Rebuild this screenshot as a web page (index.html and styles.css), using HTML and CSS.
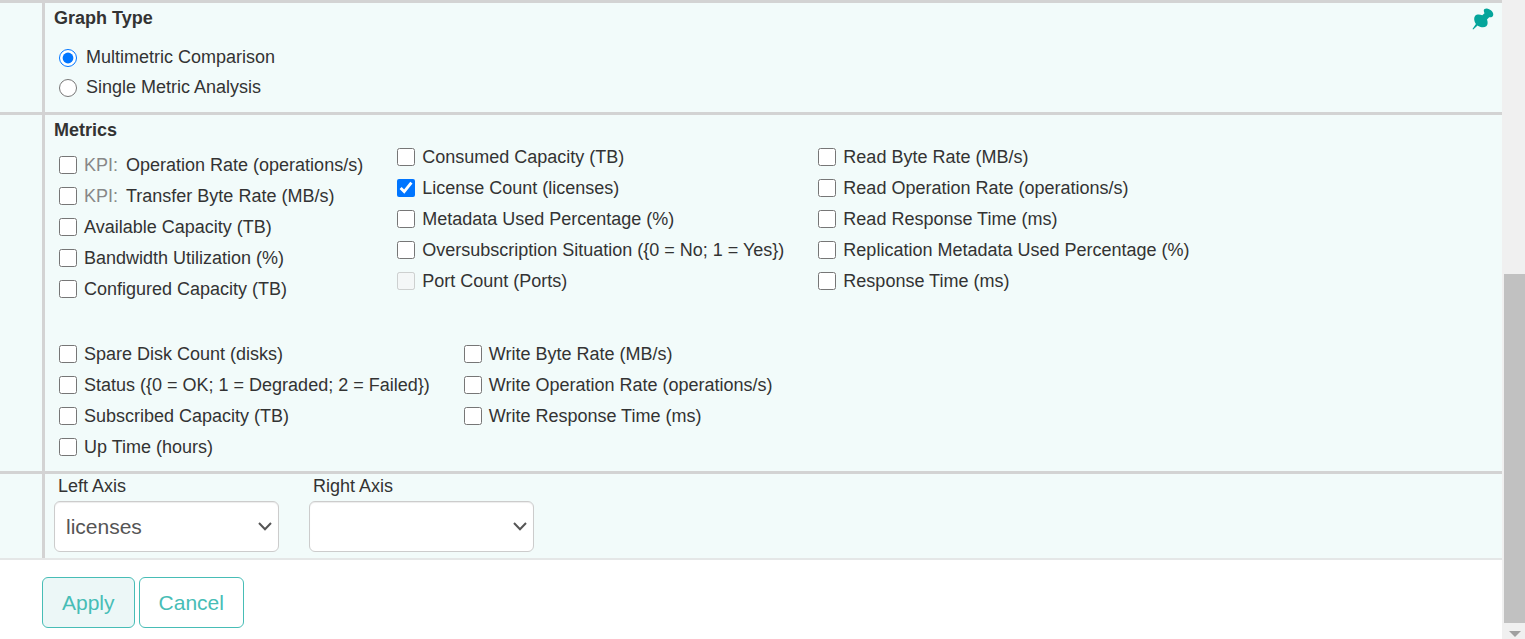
FILE: index.html
```html
<!DOCTYPE html>
<html lang="en">
<head>
    <meta charset="UTF-8">
    <meta name="viewport" content="width=device-width, initial-scale=1.0">
    <title>Graph Settings</title>
    <link rel="stylesheet" href="styles.css">
</head>
<body>

    <div class="page">
        <form class="settings">

            <div class="row">
                <div class="gutter"></div>
                <div class="cell graph-type">
                    <h2>Graph Type</h2>
                    <button type="button" class="pin" aria-label="Pin">
                        <svg width="22" height="22" viewBox="0 0 22 22"><path fill="#05a59b" d="M11.800 2.600C11.600 1.200 13 .4 14.600 .4C16.200 .4 18.200 1.400 19.500 2.700C21 4.300 21.800 6.300 21 7.800C20.300 9.100 18.900 9.500 17.200 9.200L15 11.500C16 14 15.900 16.800 14.300 18.200C12.400 19.900 9 19.600 6.200 17.900L5.600 17.500L1.200 21.500L.5 20.900L3.900 15.900C2.100 13.300 1.500 9.700 3 7.900C4.600 6 7.700 6.100 10.300 7.200L12.500 5.200C12 4.400 11.800 3.500 11.800 2.600Z"/></svg>
                    </button>
                    <label class="radio"><input type="radio" name="graph-type" checked> Multimetric Comparison</label>
                    <label class="radio"><input type="radio" name="graph-type"> Single Metric Analysis</label>
                </div>
            </div>

            <div class="row">
                <div class="gutter"></div>
                <div class="cell metrics">
                    <h2>Metrics</h2>
                    <div class="group">
                        <div class="column kpi-column">
                            <label class="check"><input type="checkbox"><span class="kpi">KPI:</span>Operation Rate (operations/s)</label>
                            <label class="check"><input type="checkbox"><span class="kpi">KPI:</span>Transfer Byte Rate (MB/s)</label>
                            <label class="check"><input type="checkbox">Available Capacity (TB)</label>
                            <label class="check"><input type="checkbox">Bandwidth Utilization (%)</label>
                            <label class="check"><input type="checkbox">Configured Capacity (TB)</label>
                        </div>
                        <div class="column">
                            <label class="check"><input type="checkbox">Consumed Capacity (TB)</label>
                            <label class="check"><input type="checkbox" checked>License Count (licenses)</label>
                            <label class="check"><input type="checkbox">Metadata Used Percentage (%)</label>
                            <label class="check"><input type="checkbox">Oversubscription Situation ({0 = No; 1 = Yes})</label>
                            <label class="check"><input type="checkbox" disabled>Port Count (Ports)</label>
                        </div>
                        <div class="column">
                            <label class="check"><input type="checkbox">Read Byte Rate (MB/s)</label>
                            <label class="check"><input type="checkbox">Read Operation Rate (operations/s)</label>
                            <label class="check"><input type="checkbox">Read Response Time (ms)</label>
                            <label class="check"><input type="checkbox">Replication Metadata Used Percentage (%)</label>
                            <label class="check"><input type="checkbox">Response Time (ms)</label>
                        </div>
                    </div>
                    <div class="group">
                        <div class="column">
                            <label class="check"><input type="checkbox">Spare Disk Count (disks)</label>
                            <label class="check"><input type="checkbox">Status ({0 = OK; 1 = Degraded; 2 = Failed})</label>
                            <label class="check"><input type="checkbox">Subscribed Capacity (TB)</label>
                            <label class="check"><input type="checkbox">Up Time (hours)</label>
                        </div>
                        <div class="column">
                            <label class="check"><input type="checkbox">Write Byte Rate (MB/s)</label>
                            <label class="check"><input type="checkbox">Write Operation Rate (operations/s)</label>
                            <label class="check"><input type="checkbox">Write Response Time (ms)</label>
                        </div>
                    </div>
                </div>
            </div>

            <div class="row">
                <div class="gutter"></div>
                <div class="cell axes">
                    <div class="axis">
                        <label for="left-axis">Left Axis</label>
                        <div class="select-box">
                            <select id="left-axis">
                                <option>licenses</option>
                            </select>
                            <svg class="arrow" width="14" height="9" viewBox="0 0 14 9"><path d="M1 1L7 7.200L13 1" fill="none" stroke="#555" stroke-width="2"/></svg>
                        </div>
                    </div>
                    <div class="axis">
                        <label for="right-axis">Right Axis</label>
                        <div class="select-box">
                            <select id="right-axis">
                                <option></option>
                            </select>
                            <svg class="arrow" width="14" height="9" viewBox="0 0 14 9"><path d="M1 1L7 7.200L13 1" fill="none" stroke="#555" stroke-width="2"/></svg>
                        </div>
                    </div>
                </div>
            </div>

            <div class="actions">
                <button type="submit" class="btn btn-apply">Apply</button>
                <button type="button" class="btn">Cancel</button>
            </div>
        </form>

        <div class="scrollbar">
            <div class="thumb"></div>
            <svg width="12" height="6" viewBox="0 0 12 6"><path d="M0 0H12L6 6Z" fill="#a0a0a0"/></svg>
        </div>
    </div>

</body>
</html>
```
FILE: styles.css
```css
* {
    box-sizing: border-box;
}
body {
    margin: 0;
    font-family: "Liberation Sans", Arial, sans-serif;
    font-size: 18px;
    line-height: 20px;
    color: #333;
    background-color: #fff;
}
.page {
    display: flex;
    min-height: 100vh;
}
.settings {
    flex: 1;
}
.row {
    display: flex;
    border-top: 3px solid #d3d3d3;
    background-color: #f2fbfa;
}
.gutter {
    width: 45px;
    border-right: 3px solid #d3d3d3;
}
.cell {
    flex: 1;
    padding-left: 9px;
}
h2 {
    margin: 0;
    padding-top: 5px;
    font-size: 18px;
    line-height: 20px;
}

/* graph type */
.graph-type {
    position: relative;
    padding-bottom: 10px;
}
.graph-type h2 {
    margin-bottom: 14px;
}
.radio {
    display: flex;
    align-items: center;
    gap: 9px;
    width: fit-content;
    height: 30px;
    padding-left: 5px;
}
input {
    width: 18px;
    height: 18px;
    margin: 0;
}
.radio input {
    margin-top: 2px;
}
.pin {
    position: absolute;
    top: 5px;
    right: 8px;
    height: 22px;
    padding: 0;
    border: none;
    background: none;
    cursor: pointer;
}

/* metrics */
.group {
    display: flex;
    gap: 34px;
    padding-left: 5px;
}
.metrics h2 + .group {
    margin-bottom: 34px;
}
.metrics h2 {
    margin-bottom: 1px;
}
.metrics {
    padding-bottom: 9px;
}
.kpi-column {
    padding-top: 8px;
}
.check {
    display: flex;
    align-items: center;
    height: 31px;
    white-space: nowrap;
}
.check input {
    margin-right: 7px;
}
.kpi {
    margin-right: 8px;
    color: #888;
}

/* axes */
.axes {
    display: flex;
    gap: 30px;
    padding-top: 2px;
    padding-bottom: 6px;
}
.axis {
    width: 225px;
}
.axis label {
    display: block;
    margin-bottom: 5px;
    padding-left: 4px;
}
.select-box {
    position: relative;
}
select {
    display: block;
    width: 100%;
    height: 51px;
    padding: 0 11px;
    appearance: none;
    font-family: inherit;
    font-size: 21px;
    color: #555;
    background-color: #fff;
    border: 1px solid #ccc;
    border-radius: 6px;
    box-shadow: inset 0 1px 1px rgba(0,0,0,0.075);
}
.arrow {
    position: absolute;
    top: 21px;
    right: 7px;
    pointer-events: none;
}

/* buttons */
.actions {
    display: flex;
    gap: 4px;
    padding: 17px 0 11px 42px;
    border-top: 2px solid #e5e7e7;
}
.btn {
    height: 51px;
    padding: 0 19px;
    font-family: inherit;
    font-size: 21px;
    color: #47bdb6;
    background-color: #fff;
    border: 1px solid #47bdb6;
    border-radius: 6px;
    cursor: pointer;
}
.btn-apply {
    background-color: #ecf7f7;
}

/* scrollbar */
.scrollbar {
    display: flex;
    flex-direction: column;
    align-items: center;
    justify-content: flex-end;
    width: 23px;
    padding: 0 0 2px 2px;
    background-color: #f0f0f0;
}
.thumb {
    width: 100%;
    height: 349px;
    margin-bottom: 8px;
    background-color: #c1c1c1;
}
```
